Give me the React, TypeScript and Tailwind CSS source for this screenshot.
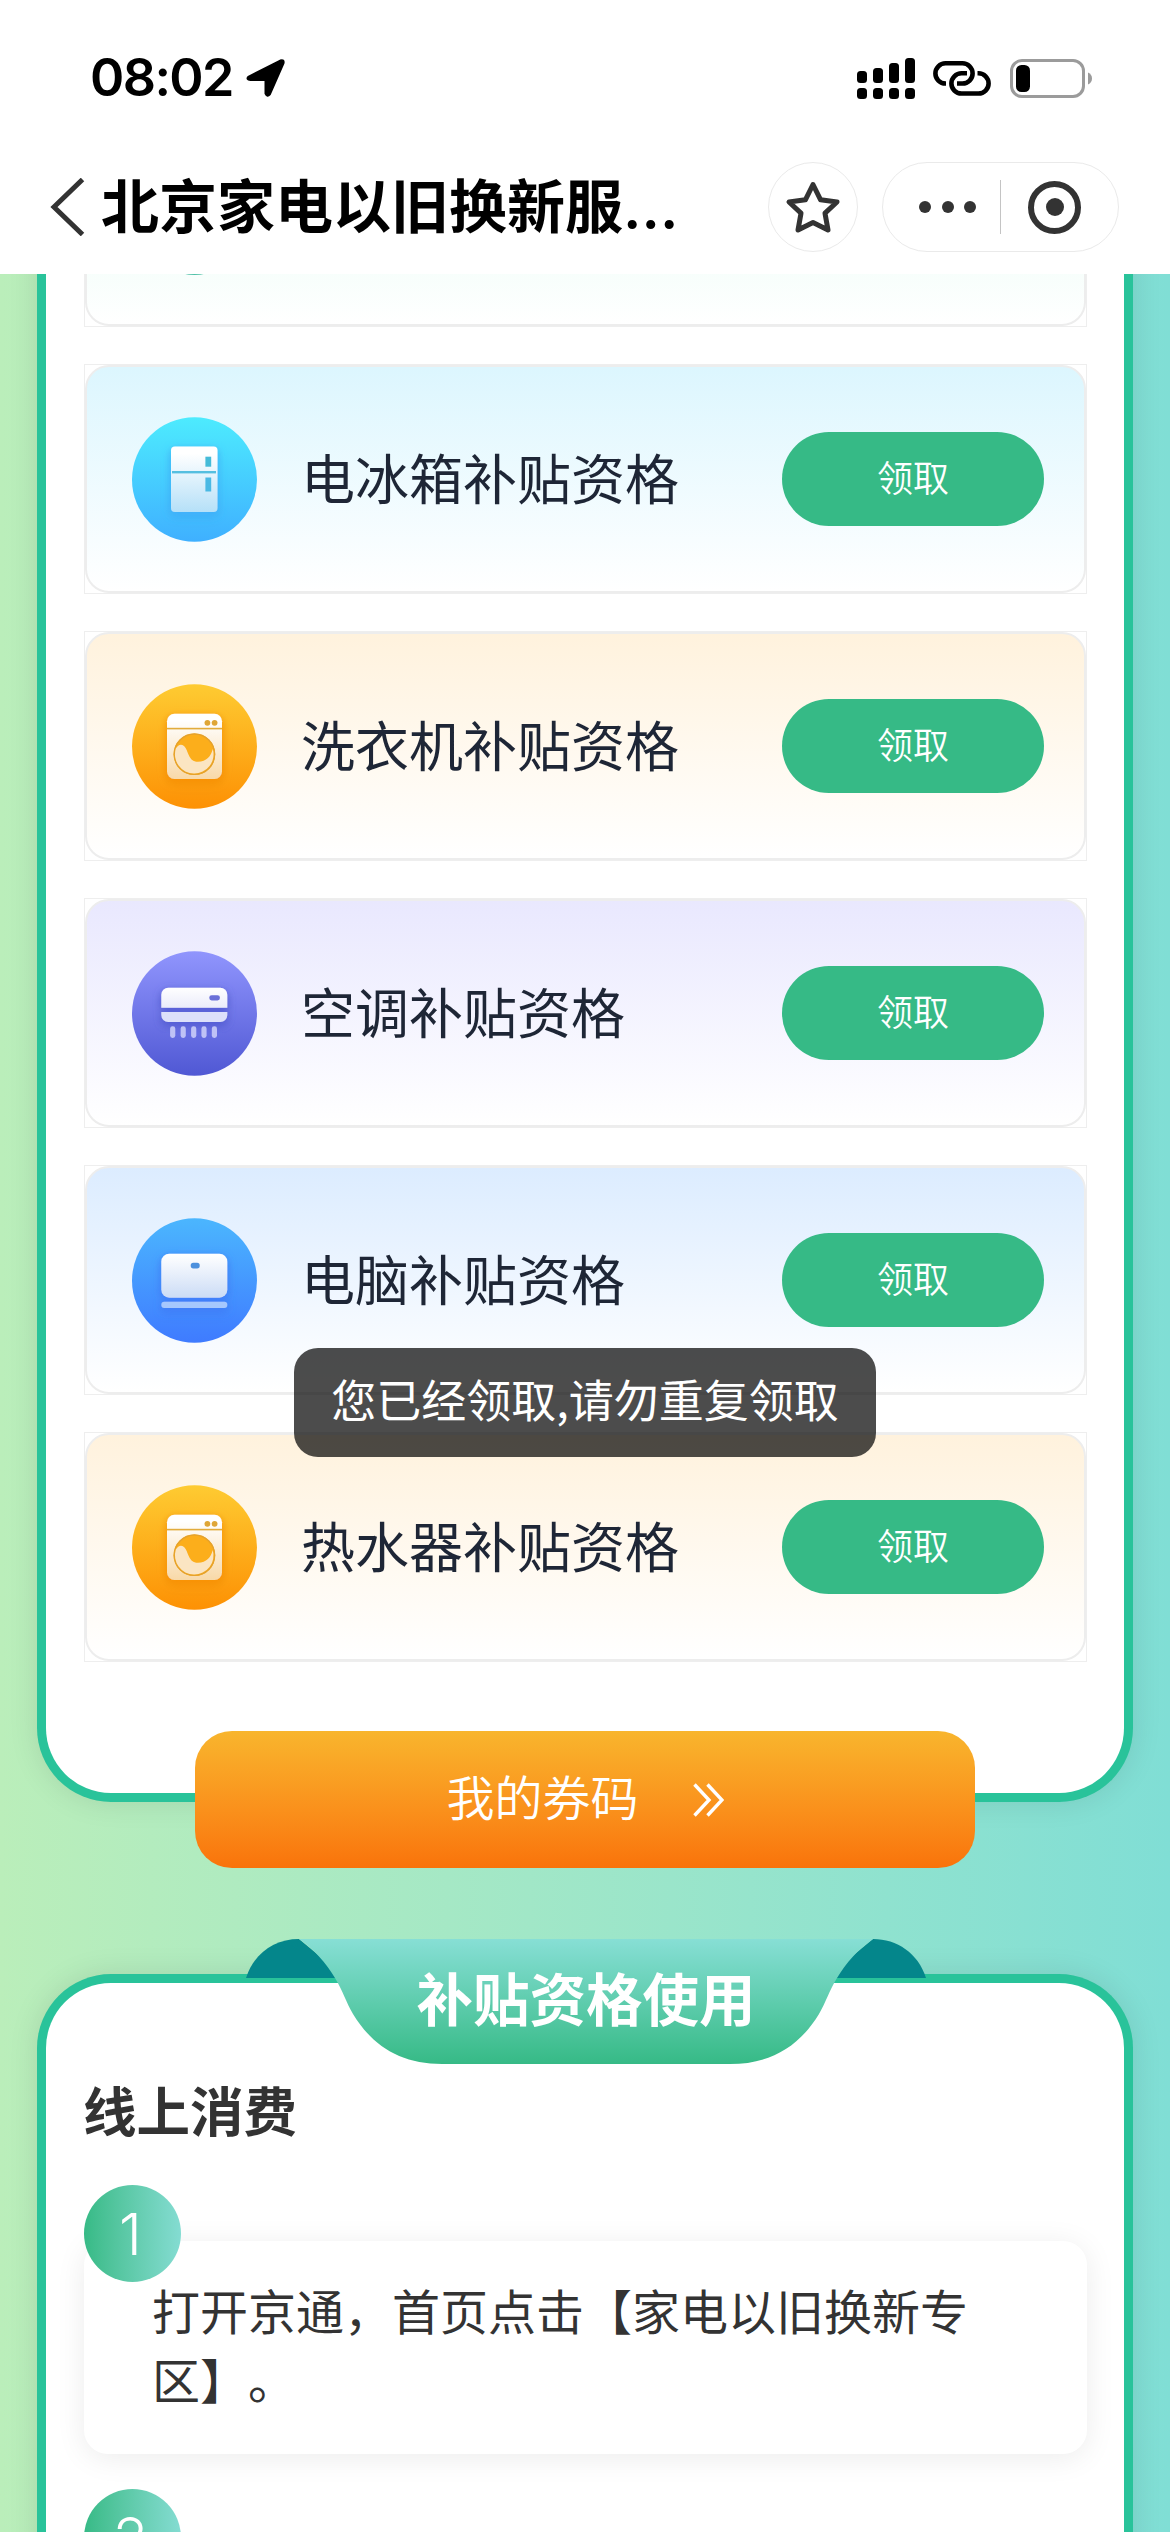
import type { ReactNode } from "react";

interface Appliance {
  title: string;
  gradient: string;
  icon: ReactNode;
}

interface IconCircleProps {
  id: string;
  from: string;
  to: string;
  bodyTo?: string;
  children?: ReactNode;
}

function IconCircle({ id, from, to, bodyTo = "#ffffff", children }: IconCircleProps) {
  return (
    <svg width="125" height="125" viewBox="0 0 125 125" className="shrink-0">
      <defs>
        <linearGradient id={`${id}-bg`} x1="0" y1="0" x2="0" y2="1">
          <stop offset="0" stopColor={from} />
          <stop offset="1" stopColor={to} />
        </linearGradient>
        <linearGradient id={`${id}-body`} gradientUnits="userSpaceOnUse" x1="0" y1="30" x2="0" y2="95">
          <stop offset="0.1" stopColor="#ffffff" />
          <stop offset="1" stopColor={bodyTo} />
        </linearGradient>
        <filter id={`${id}-shadow`} x="-30%" y="-30%" width="160%" height="160%">
          <feDropShadow dx="0" dy="3" stdDeviation="4" floodColor={to} floodOpacity="0.9" />
          <feDropShadow dx="0" dy="2" stdDeviation="3" floodColor="#000000" floodOpacity="0.12" />
        </filter>
      </defs>
      <ellipse cx="62.5" cy="62.5" rx="62.5" ry="62.3" fill={`url(#${id}-bg)`} />
      {children}
    </svg>
  );
}

function FridgeIcon() {
  return (
    <IconCircle id="fridge" from="#4debfe" to="#3fb0ff" bodyTo="#b5e0f8">
      <rect x="39" y="29.5" width="46.5" height="65.5" rx="4" fill="url(#fridge-body)" filter="url(#fridge-shadow)" />
      <rect x="40" y="54" width="44" height="2.4" fill="#55bfe0" />
      <rect x="73.4" y="39.7" width="5.8" height="10" fill="#45bbd8" />
      <rect x="73.4" y="60.5" width="5.8" height="14" fill="#4ab9e4" />
    </IconCircle>
  );
}

function WasherIcon({ id }: { id: string }) {
  return (
    <IconCircle id={id} from="#fecb32" to="#fd9104" bodyTo="#f8d9a8">
      <rect x="35" y="29.7" width="55" height="65.3" rx="7.5" fill={`url(#${id}-body)`} filter={`url(#${id}-shadow)`} />
      <rect x="35" y="43.8" width="55" height="1.6" fill="#e2ac3c" />
      <circle cx="75.4" cy="38.8" r="2.9" fill="#dfa637" />
      <circle cx="82.6" cy="38.8" r="2.9" fill="#dfa637" />
      <circle cx="62.4" cy="70.2" r="20.8" fill="#fcae1b" />
      <circle cx="62.4" cy="70.2" r="20.2" fill="none" stroke="#e5a22c" strokeWidth="1.4" />
      <path
        d="M43.8 64.5Q47.5 58.5 52 62C57 67 56 77.8 66 77.8C74.5 77.8 79 72 80.8 65A19.3 19.3 0 1 1 43.8 64.5Z"
        fill="#fbe5c2"
      />
    </IconCircle>
  );
}

function AirConditionerIcon() {
  return (
    <IconCircle id="ac" from="#9095fd" to="#5058d4" bodyTo="#c3c7f2">
      <g filter="url(#ac-shadow)">
        <path d="M29.3 56.8V43.7a7 7 0 0 1 7-7h52a7 7 0 0 1 7 7v13.1z" fill="url(#ac-body)" />
        <path d="M29.3 61h66v3a7 7 0 0 1-7 7h-52a7 7 0 0 1-7-7z" fill="#dde0fa" />
      </g>
      <rect x="77.3" y="44.2" width="10.6" height="5.2" rx="2.4" fill="#6a70d8" />
      {[40.7, 51.2, 61.7, 72, 82.4].map((x) => (
        <rect key={x} x={x - 2.6} y="75.3" width="5.2" height="11.6" rx="2.4" fill="#bfc2f6" />
      ))}
    </IconCircle>
  );
}

function ComputerIcon() {
  return (
    <IconCircle id="pc" from="#4bb6fe" to="#3f7bff" bodyTo="#b9cff2">
      <g filter="url(#pc-shadow)">
        <rect x="29.3" y="35.7" width="66" height="44" rx="8" fill="url(#pc-body)" />
        <rect x="29.3" y="83.7" width="66" height="6.4" rx="3" fill="#a6c8fd" />
      </g>
      <rect x="58.7" y="44.8" width="9" height="5.6" rx="2.6" fill="#4c90dd" />
    </IconCircle>
  );
}

const appliances: Appliance[] = [
  { title: "电冰箱补贴资格", gradient: "from-[#dcf6fe]", icon: <FridgeIcon /> },
  { title: "洗衣机补贴资格", gradient: "from-[#fff2dd]", icon: <WasherIcon id="washer" /> },
  { title: "空调补贴资格", gradient: "from-[#e9e8fe]", icon: <AirConditionerIcon /> },
  { title: "电脑补贴资格", gradient: "from-[#dcecff]", icon: <ComputerIcon /> },
  { title: "热水器补贴资格", gradient: "from-[#fff2dd]", icon: <WasherIcon id="heater" /> },
];

function RowFrame({ gradient, children }: { gradient: string; children: ReactNode }) {
  return (
    <li className="h-[230px] border border-[#eeeeee]">
      <div
        className={`flex h-full items-center rounded-[24px] border-2 border-[#ededed] bg-linear-to-b ${gradient} to-white pl-[45px] pr-[40px]`}
      >
        {children}
      </div>
    </li>
  );
}

function StatusBar() {
  return (
    <div className="flex h-[156px] items-center justify-between pl-[90px] pr-[78px]">
      <div className="flex items-center gap-[13px]">
        <span className="font-['Inter'] text-[52px] leading-none font-semibold tracking-[-1.6px]">08:02</span>
        <svg width="40" height="40" viewBox="0 0 40 40">
          <path
            d="M3 19L34.5 3Q37.8 1.8 37 5.2L23.5 36Q21.2 38.6 20 35.5V21.5H4.5Q0.5 21 3 19Z"
            stroke="#000"
            strokeWidth="3"
            strokeLinejoin="round"
          />
        </svg>
      </div>
      <div className="flex items-center">
        <svg width="58" height="41" viewBox="0 0 58 41">
          <rect x="0" y="13" width="10" height="12" rx="3.5" />
          <rect x="16" y="10" width="10" height="15" rx="3.5" />
          <rect x="32" y="5" width="10" height="20" rx="3.5" />
          <rect x="48" y="0" width="10" height="25" rx="3.5" />
          {[0, 16, 32, 48].map((x) => (
            <rect key={x} x={x} y="30" width="10" height="11" rx="3.5" />
          ))}
        </svg>
        <svg width="58" height="35" viewBox="0 0 58 35" fill="none" stroke="#000" strokeWidth="4.6" className="ml-[18px]">
          <path d="M13 22.5H12.5A10.1 10.1 0 0 1 12.5 2.3H29.5A10.1 10.1 0 0 1 29.5 22.5H24" />
          <path d="M34 12.3H28.5A10.1 10.1 0 0 0 28.5 32.5H45.5A10.1 10.1 0 0 0 45.5 12.3H44.5" />
        </svg>
        <svg width="82" height="39" viewBox="0 0 82 39" className="ml-[19px]">
          <rect x="1.5" y="1.5" width="72" height="36" rx="10.5" fill="none" stroke="#9b9b9b" strokeWidth="3" />
          <rect x="6" y="6" width="14" height="27" rx="5.5" />
          <path d="M78 13.5q4 1.8 4 6t-4 6z" fill="#9b9b9b" />
        </svg>
      </div>
    </div>
  );
}

function TitleBar() {
  return (
    <div className="flex h-[102px] items-center pl-[50px] pr-[51px]">
      <svg width="35" height="58" viewBox="0 0 35 58" fill="none" stroke="#333" strokeWidth="5">
        <path d="M32.5 1.5L4 29L32.5 56.5" />
      </svg>
      <h1 className="ml-[16px] flex-1 pb-[5px] text-[58px] leading-[80px] font-bold whitespace-nowrap text-black">
        北京家电以旧换新服
        <span className="font-['Inter'] font-semibold tracking-[1px]">…</span>
      </h1>
      <div className="flex size-[90px] items-center justify-center rounded-full border border-[#eaeaea]">
        <svg width="56" height="54" viewBox="0 0 56 54" fill="none" stroke="#333" strokeWidth="5" strokeLinejoin="round">
          <path d="M28 4.5L35.6 19.8L52 22L40 33.2L43 50L28 42.4L13 50L16 33.2L4 22L20.4 19.8Z" />
        </svg>
      </div>
      <div className="ml-[24px] flex h-[90px] w-[237px] items-center rounded-full border border-[#eaeaea]">
        <div className="ml-[36px] flex gap-[10.5px]">
          <span className="size-3 rounded-full bg-[#333]" />
          <span className="size-3 rounded-full bg-[#333]" />
          <span className="size-3 rounded-full bg-[#333]" />
        </div>
        <span className="ml-[24px] h-[54px] w-px bg-[#c4c4c4]" />
        <span className="ml-[27px] flex size-[53px] items-center justify-center rounded-full border-6 border-[#333]">
          <span className="size-[18px] rounded-full bg-[#333]" />
        </span>
      </div>
    </div>
  );
}

function Ribbon({ title }: { title: string }) {
  return (
    <div className="absolute top-[-44px] left-[200px] h-[125px] w-[680px]">
      <svg width="680" height="125" viewBox="0 0 680 125" className="absolute inset-0">
        <defs>
          <linearGradient id="ribbon" x1="0" y1="0" x2="0" y2="1">
            <stop offset="0" stopColor="#87dfd5" />
            <stop offset="1" stopColor="#36ba86" />
          </linearGradient>
        </defs>
        <path d="M0 39C8 14 29 0 53 0L100 39Z" fill="#04868b" />
        <path d="M680 39C672 14 651 0 627 0L580 39Z" fill="#04868b" />
        <path
          d="M53 0C68 10 80 24 89 39C97 52 100 63 107 75C127 108 156 125 196 125H484C524 125 553 108 573 75C580 63 583 52 591 39C600 24 612 10 627 0Z"
          fill="url(#ribbon)"
        />
      </svg>
      <h2 className="relative -top-[3px] text-center text-[56.5px] leading-[120px] font-bold text-white">{title}</h2>
    </div>
  );
}

function StepNumber({ value }: { value: number }) {
  return (
    <div className="relative flex size-[97px] items-center justify-center rounded-full bg-linear-to-r from-[#36ba86] to-[#84dcd2] pr-1 font-['Inter'] text-[58px] leading-none font-light text-white">
      {value}
    </div>
  );
}

export default function App() {
  return (
    <div className="relative h-[2532px] w-[1170px] overflow-hidden bg-linear-to-r from-[#baeeba] to-[#80ded5] font-['Noto_Sans_CJK_SC',sans-serif]">
      <header className="relative z-10 h-[274px] bg-white">
        <StatusBar />
        <TitleBar />
      </header>

      <main className="-mt-[274px] px-[37px]">
        <section className="relative h-[1802px] rounded-b-[74px] border-9 border-t-0 border-[#29c39a] bg-white pt-[97px] pr-[37px] pl-[38px] shadow-[0_0_30px_rgba(0,0,0,0.1)]">
          <ul className="flex flex-col gap-[37px]">
            <RowFrame gradient="from-[#dcfbf0]">
              <IconCircle id="first" from="#4fe0c0" to="#16ab8a" />
            </RowFrame>
            {appliances.map((item) => (
              <RowFrame key={item.title} gradient={item.gradient}>
                {item.icon}
                <span className="ml-[44px] flex-1 pb-[5px] text-[54px] leading-[80px] text-[#1e2636]">{item.title}</span>
                <button className="h-[94px] w-[262px] rounded-full bg-[#36ba86] pb-[6px] text-[36px] font-[350] text-white">
                  领取
                </button>
              </RowFrame>
            ))}
          </ul>
          <button className="absolute top-[1731px] left-[149px] flex h-[137px] w-[780px] items-center justify-center rounded-[37px] bg-linear-to-b from-[#f8b52d] to-[#f9730a] text-[48px] font-[350] text-white">
            <span className="-mt-[9px]">我的券码</span>
            <svg width="31" height="36" viewBox="0 0 31 36" fill="none" stroke="#fff" strokeWidth="3.4" className="ml-[54px]">
              <path d="M1.5 2.5L16 18L1.5 33.5M14.5 2.5L29 18L14.5 33.5" />
            </svg>
          </button>
        </section>

        <section className="relative mt-[172px] h-[640px] rounded-t-[74px] border-9 border-b-0 border-[#29c39a] bg-white pt-[86px] pr-[37px] pl-[38px] shadow-[0_0_30px_rgba(0,0,0,0.1)]">
          <Ribbon title="补贴资格使用" />
          <h3 className="-ml-px text-[53.5px] leading-[80px] font-bold text-[#333]">线上消费</h3>
          <div className="mt-[36px]">
            <StepNumber value={1} />
            <p className="-mt-[41px] h-[213px] rounded-[24px] bg-white px-[68px] pt-[34px] text-[48px] leading-[69px] text-[#333] shadow-[0_4px_30px_rgba(0,0,0,0.08)] [text-spacing-trim:space-all]">
              打开京通，首页点击【家电以旧换新专区】。
            </p>
          </div>
          <div className="mt-[35px]">
            <StepNumber value={2} />
          </div>
        </section>
      </main>

      <div className="absolute top-[1348px] left-[294px] flex h-[109px] w-[582px] items-center justify-center rounded-[24px] bg-black/70 pb-[7px] text-[45px] whitespace-nowrap text-white">
        您已经领取,请勿重复领取
      </div>
    </div>
  );
}
